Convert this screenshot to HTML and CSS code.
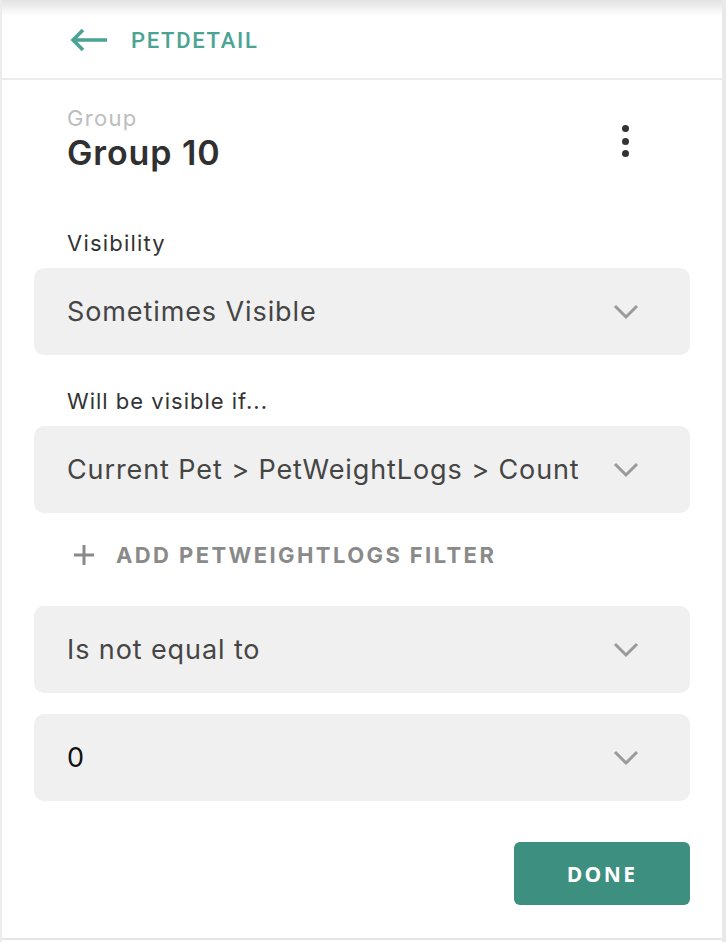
FILE: index.html
```html
<!DOCTYPE html>
<html>
<head>
<meta charset="utf-8">
<link rel="stylesheet" href="styles.css">
</head>
<body>
<div class="frame">
  <div class="panel">
    <header class="topbar">
      <svg class="back" width="38" height="24" viewBox="0 0 38 24">
        <path d="M37 12H3M13 2L3 12l10 10" fill="none" stroke="#4ba493" stroke-width="3.6"/>
      </svg>
      <span class="crumb">PETDETAIL</span>
    </header>
    <main class="content">
      <div class="title-row">
        <div class="titles">
          <div class="kind">Group</div>
          <div class="name">Group 10</div>
        </div>
        <div class="kebab"><span></span><span></span><span></span></div>
      </div>

      <div class="field-label">Visibility</div>
      <div class="select"><span>Sometimes Visible</span><svg class="chev" width="26" height="16" viewBox="0 0 26 16"><path d="M2 2l11 11L24 2" fill="none" stroke="#9a9a9a" stroke-width="3"/></svg></div>

      <div class="field-label second">Will be visible if...</div>
      <div class="select"><span>Current Pet &gt; PetWeightLogs &gt; Count</span><svg class="chev" width="26" height="16" viewBox="0 0 26 16"><path d="M2 2l11 11L24 2" fill="none" stroke="#9a9a9a" stroke-width="3"/></svg></div>

      <div class="add-filter">
        <svg width="20" height="20" viewBox="0 0 20 20"><path d="M10 0v20M0 10h20" stroke="#8a8a8a" stroke-width="3"/></svg>
        <span>ADD PETWEIGHTLOGS FILTER</span>
      </div>

      <div class="select"><span>Is not equal to</span><svg class="chev" width="26" height="16" viewBox="0 0 26 16"><path d="M2 2l11 11L24 2" fill="none" stroke="#9a9a9a" stroke-width="3"/></svg></div>
      <div class="select value"><span>0</span><svg class="chev" width="26" height="16" viewBox="0 0 26 16"><path d="M2 2l11 11L24 2" fill="none" stroke="#9a9a9a" stroke-width="3"/></svg></div>

      <div class="actions"><button class="done">DONE</button></div>
    </main>
  </div>
</div>
</body>
</html>
```

FILE: styles.css
```css
* { box-sizing: border-box; }
html, body { margin: 0; padding: 0; background: #ffffff; }
body { font-family: Inter, "Open Sans", "Liberation Sans", sans-serif; color: #333; }

.frame {
  width: 726px;
  height: 942px;
  border-right: 4px solid #e9e9e9;
  border-left: 2px solid #ececec;
  background: #fff;
  position: relative;
}
.frame::before {
  content: "";
  position: absolute;
  left: 0; right: 0; top: 0;
  height: 16px;
  background: linear-gradient(#e2e2e2, rgba(255,255,255,0));
  pointer-events: none;
}
.panel {
  height: 940px;
  border-bottom: 2px solid #e6e6e6;
}

.topbar {
  height: 80px;
  border-bottom: 2px solid #ececec;
  display: flex;
  align-items: center;
  padding-left: 68px;
  padding-top: 2px;
}
.back { display: block; }
.crumb {
  margin-left: 23px;
  font-family: Roboto, "Liberation Sans", sans-serif;
  font-weight: 500;
  font-size: 22px;
  color: #4ba493;
  letter-spacing: 1.7px;
}

.content {
  padding: 0 32px;
}
.title-row {
  display: flex;
  justify-content: space-between;
  align-items: flex-start;
  padding: 25px 0 0 33px;
}
.kind {
  font-size: 22px;
  line-height: 26px;
  color: #bdbdbd;
  letter-spacing: 1.3px;
}
.name {
  font-size: 34px;
  line-height: 40px;
  font-weight: 600;
  color: #303030;
  margin-top: 2px;
  letter-spacing: 0.9px;
}
.kebab {
  display: flex;
  flex-direction: column;
  gap: 5.5px;
  margin: 20px 61px 0 0;
}
.kebab span {
  width: 7px; height: 7px;
  border-radius: 50%;
  background: #333;
}

.field-label {
  padding-left: 33px;
  font-size: 22px;
  line-height: 28px;
  color: #333;
  margin-top: 56px;
  margin-bottom: 11px;
  letter-spacing: 1.2px;
}
.field-label.second { margin-top: 32px; margin-bottom: 11px; letter-spacing: 1px; }

.select {
  height: 87px;
  border-radius: 10px;
  background: #f0f0f0;
  display: flex;
  align-items: center;
  justify-content: space-between;
  padding: 0 51px 0 33px;
  font-size: 27px;
  color: #454545;
  letter-spacing: 0.9px;
}
.select + .select { margin-top: 21px; }
.select.value { color: #111; }
.chev { display: block; }

.add-filter {
  display: flex;
  align-items: center;
  height: 93px;
  padding-left: 40px;
  padding-bottom: 9px;
  gap: 22px;
  font-size: 22px;
  font-weight: 700;
  color: #8a8a8a;
  letter-spacing: 2.4px;
}

.actions {
  display: flex;
  justify-content: flex-end;
  margin-top: 41px;
}
.done {
  width: 176px;
  height: 63px;
  border: none;
  border-radius: 6px;
  background: #3d8f7f;
  color: #fff;
  font-family: "Open Sans", "Liberation Sans", sans-serif;
  font-weight: 700;
  font-size: 21px;
  letter-spacing: 2.4px;
  padding: 0;
}
```
